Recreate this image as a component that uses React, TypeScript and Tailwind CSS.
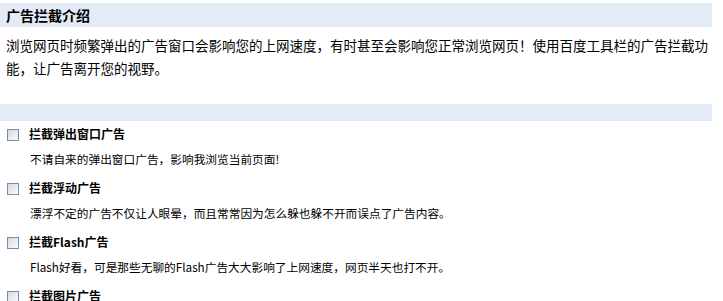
const OPTIONS = [
  { label: "拦截弹出窗口广告", desc: "不请自来的弹出窗口广告，影响我浏览当前页面!" },
  { label: "拦截浮动广告", desc: "漂浮不定的广告不仅让人眼晕，而且常常因为怎么躲也躲不开而误点了广告内容。" },
  { label: "拦截Flash广告", desc: "Flash好看，可是那些无聊的Flash广告大大影响了上网速度，网页半天也打不开。" },
  { label: "拦截图片广告", desc: "" },
];

function Checkbox() {
  return (
    <span className="box-border block h-[12px] w-[12px] shrink-0 border border-[#7a8ea8] bg-gradient-to-br from-[#d6dae0] to-[#fbfbfb]" />
  );
}

export default function App() {
  return (
    <div
      className="h-[301px] w-[723px] overflow-hidden bg-white pt-[3px] text-black"
      style={{ fontFamily: '"Noto Sans CJK SC", "Liberation Sans", sans-serif' }}
    >
      <div className="w-[712px]">
        {/* intro header */}
        <div className="flex h-[24px] items-center bg-[#e3ebf6] pl-[6px] text-[14px] font-bold leading-none">
          广告拦截介绍
        </div>
        <p className="mt-[7px] pl-[6px] text-[13.5px] leading-[23px]">
          浏览网页时频繁弹出的广告窗口会影响您的上网速度，有时甚至会影响您正常浏览网页！使用百度工具栏的广告拦截功能，让广告离开您的视野。
        </p>

        {/* options header */}
        <div className="mt-[24px] h-[17px] bg-[#e3ebf6]" />

        <div className="flex flex-col">
          {OPTIONS.map((opt) => (
            <div key={opt.label} className="flex h-[54px] flex-col">
              <label className="flex h-[26px] items-center pl-[7px]">
                <span className="mt-[1px]">
                  <Checkbox />
                </span>
                <span className="ml-[10px] text-[12px] font-bold leading-none">{opt.label}</span>
              </label>
              <div className="h-[28px] pl-[30px] text-[11.7px] leading-[24px]">{opt.desc}</div>
            </div>
          ))}
        </div>
      </div>
    </div>
  );
}
